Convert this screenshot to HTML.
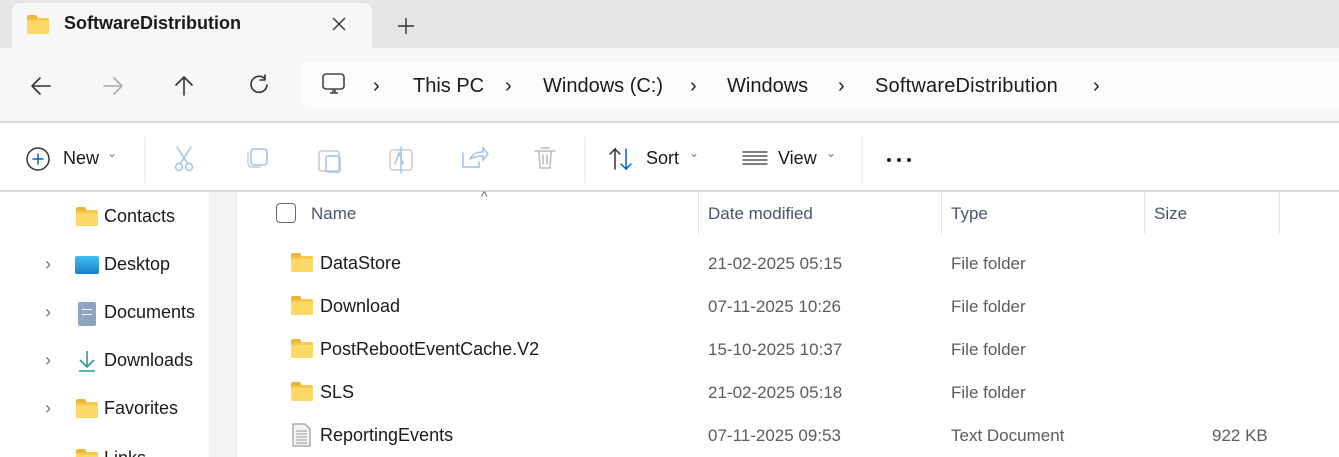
<!DOCTYPE html>
<html><head><style>
*{margin:0;padding:0;box-sizing:border-box}
html,body{width:1339px;height:457px;overflow:hidden}
body{background:#fff;font-family:"Segoe UI","Liberation Sans",sans-serif;color:#1a1a1a;position:relative}
.a{position:absolute}
.t{font-size:18px;white-space:nowrap}
.g{color:#5c5c5c;font-size:17px}
.h{color:#4a5568;font-size:17px}
.fold{position:absolute;width:22px;height:16px;background:#f8c94a;border-radius:2px}
.fold:before{content:"";position:absolute;left:0;top:-3px;width:10px;height:4px;background:#e9b83a;border-radius:2px 2px 0 0}
.fold:after{content:"";position:absolute;left:0;top:3px;width:22px;height:13px;background:#fcd869;border-radius:1px}
.chev{position:absolute;color:#777;font-size:18px}
</style></head><body>
<div class="a" style="left:0;top:0;width:1339px;height:48px;background:#e6e6e6"></div>
<div class="a" style="left:12px;top:3px;width:360px;height:46px;background:#f7f7f7;border-radius:8px 8px 0 0"></div>
<div class="fold" style="left:27px;top:18px"></div>
<div class="a t" style="left:64px;top:13px;font-size:18px;font-weight:600">SoftwareDistribution</div>
<svg class="a" style="left:330px;top:15px" width="18" height="18"><path d="M3 3l12 12M15 3L3 15" stroke="#333" stroke-width="1.4"/></svg>
<svg class="a" style="left:396px;top:16px" width="20" height="20"><path d="M10 2v16M2 10h16" stroke="#333" stroke-width="1.4"/></svg>
<div class="a" style="left:0;top:48px;width:1339px;height:73px;background:#f7f7f7"></div>
<div class="a" style="left:302px;top:62px;width:1037px;height:47px;background:#fcfcfc;border-radius:6px 0 0 6px"></div>
<svg class="a" style="left:0;top:60px" width="300" height="50"><g fill="none" stroke-width="1.6" stroke-linecap="round" stroke-linejoin="round">
<path d="M32 26H50M32 26l8-8M32 26l8 8" stroke="#333"/>
<path d="M104 26h18M122 26l-8-8M122 26l-8 8" stroke="#aaa"/>
<path d="M184 17v18M184 17l-8 8M184 17l8 8" stroke="#333"/>
<path d="M265 19a8 8 0 1 0 2 6M265 15v5h-5" stroke="#333"/>
</g></svg>
<svg class="a" style="left:320px;top:72px" width="30" height="26"><rect x="3" y="2" width="21" height="15" rx="3" fill="none" stroke="#444" stroke-width="1.6"/><path d="M10 21h8M13 17v4M15 17v4" stroke="#444" stroke-width="1.5"/></svg>
<div class="a t" style="left:373px;top:75px;font-size:20px">›</div>
<div class="a t" style="left:413px;top:75px;font-size:20px">This PC</div>
<div class="a t" style="left:505px;top:75px;font-size:20px">›</div>
<div class="a t" style="left:543px;top:75px;font-size:20px">Windows (C:)</div>
<div class="a t" style="left:690px;top:75px;font-size:20px">›</div>
<div class="a t" style="left:727px;top:75px;font-size:20px">Windows</div>
<div class="a t" style="left:838px;top:75px;font-size:20px">›</div>
<div class="a t" style="left:875px;top:75px;font-size:20px;letter-spacing:0.2px">SoftwareDistribution</div>
<div class="a t" style="left:1093px;top:75px;font-size:20px">›</div>
<div class="a" style="left:0;top:121px;width:1339px;height:2px;background:#d9d9d9"></div>
<svg class="a" style="left:0;top:123px" width="940" height="68"><g fill="none" stroke-width="1.5" stroke-linecap="round">
<circle cx="38" cy="36" r="11" stroke="#333"/><path d="M38 31v10M33 36h10" stroke="#0067c0"/>
<path d="M177 24l11 17M191 24l-11 17" stroke="#9ec3e6"/><circle cx="179" cy="44" r="3.5" stroke="#9ec3e6"/><circle cx="189" cy="44" r="3.5" stroke="#9ec3e6"/>
<rect x="251" y="26" width="16" height="16" rx="3" stroke="#9ec3e6"/><path d="M248 30v10a4 4 0 0 0 4 4h8" stroke="#ccc"/>
<rect x="319" y="28" width="20" height="20" rx="2" stroke="#ccc"/><rect x="326" y="33" width="14" height="16" rx="2" stroke="#9ec3e6"/>
<rect x="390" y="27" width="22" height="20" rx="3" stroke="#ccc"/><path d="M401 24v26M395 41l4-11 4 11" stroke="#9ec3e6"/>
<path d="M463 30v14h16v-5M470 36c3-6 8-7 13-7v-4l5 6-5 6v-4c-5 0-9 1-13 3" stroke="#9ec3e6"/>
<path d="M535 28h20M539 28l1 17h10l1-17M541 25h8M543 32v9M547 32v9" stroke="#bbb"/>
<path d="M615 46V26l-5 5M615 26l5 5" stroke="#333"/><path d="M626 26v20l-5-5M626 46l5-5" stroke="#0067c0"/>
<path d="M743 29h24M743 33h24M743 37h24M743 41h24" stroke="#333" stroke-width="1.2"/>
</g>
<circle cx="889" cy="37" r="2" fill="#222"/><circle cx="899" cy="37" r="2" fill="#222"/><circle cx="909" cy="37" r="2" fill="#222"/>
<path d="M145 14v46M585 14v46M862 14v46" stroke="#e3e3e3"/>
</svg>
<div class="a t" style="left:63px;top:148px">New</div><div class="chev" style="left:107px;top:146px;font-size:12px">⌄</div>
<div class="a t" style="left:646px;top:148px">Sort</div><div class="chev" style="left:689px;top:146px;font-size:12px">⌄</div>
<div class="a t" style="left:778px;top:148px">View</div><div class="chev" style="left:826px;top:146px;font-size:12px">⌄</div>
<div class="a" style="left:0;top:190px;width:1339px;height:2px;background:#d9d9d9"></div>
<div class="a" style="left:209px;top:192px;width:27px;height:265px;background:#f3f3f3"></div>
<div class="a" style="left:236px;top:192px;width:1px;height:265px;background:#e5e5e5"></div>
<div class="fold" style="left:76px;top:210px"></div><div class="a t" style="left:104px;top:206px">Contacts</div>
<div class="chev" style="left:45px;top:254px">›</div>
<div class="a" style="left:75px;top:256px;width:24px;height:18px;background:linear-gradient(#3fc0ee,#1a7fc9);border-radius:2px"></div><div class="a t" style="left:104px;top:254px">Desktop</div>
<div class="chev" style="left:45px;top:302px">›</div>
<div class="a" style="left:78px;top:302px;width:18px;height:24px;background:#8fa4c0;border-radius:2px"></div><div class="a" style="left:82px;top:309px;width:10px;height:6px;border-top:1.5px solid #fff;border-bottom:1.5px solid #fff"></div><div class="a t" style="left:104px;top:302px">Documents</div>
<div class="chev" style="left:45px;top:350px">›</div>
<svg class="a" style="left:76px;top:348px" width="22" height="26"><path d="M11 3v16M4 12l7 7 7-7M3 23h16" fill="none" stroke="#2a9d8f" stroke-width="1.6"/></svg><div class="a t" style="left:104px;top:350px">Downloads</div>
<div class="chev" style="left:45px;top:398px">›</div>
<div class="fold" style="left:76px;top:402px"></div><div class="a t" style="left:104px;top:398px">Favorites</div>
<div class="fold" style="left:76px;top:452px"></div><div class="a t" style="left:104px;top:448px">Links</div>
<div class="a" style="left:276px;top:203px;width:20px;height:20px;border:1.5px solid #666;border-radius:4px"></div>
<div class="a h" style="left:311px;top:204px">Name</div>
<div class="a" style="left:481px;top:188px;color:#666;font-size:14px">^</div>
<div class="a" style="left:698px;top:192px;width:1px;height:42px;background:#e5e5e5"></div>
<div class="a h" style="left:708px;top:204px">Date modified</div>
<div class="a" style="left:941px;top:192px;width:1px;height:42px;background:#e5e5e5"></div>
<div class="a h" style="left:951px;top:204px">Type</div>
<div class="a" style="left:1144px;top:192px;width:1px;height:42px;background:#e5e5e5"></div>
<div class="a h" style="left:1154px;top:204px">Size</div>
<div class="a" style="left:1279px;top:192px;width:1px;height:42px;background:#e5e5e5"></div>
<div class="fold" style="left:291px;top:256px"></div><div class="a t" style="left:320px;top:253px">DataStore</div><div class="a g" style="left:708px;top:254px">21-02-2025 05:15</div><div class="a g" style="left:951px;top:254px">File folder</div>
<div class="fold" style="left:291px;top:299px"></div><div class="a t" style="left:320px;top:296px">Download</div><div class="a g" style="left:708px;top:297px">07-11-2025 10:26</div><div class="a g" style="left:951px;top:297px">File folder</div>
<div class="fold" style="left:291px;top:342px"></div><div class="a t" style="left:320px;top:339px">PostRebootEventCache.V2</div><div class="a g" style="left:708px;top:340px">15-10-2025 10:37</div><div class="a g" style="left:951px;top:340px">File folder</div>
<div class="fold" style="left:291px;top:385px"></div><div class="a t" style="left:320px;top:382px">SLS</div><div class="a g" style="left:708px;top:383px">21-02-2025 05:18</div><div class="a g" style="left:951px;top:383px">File folder</div>
<svg class="a" style="left:292px;top:423px" width="20" height="24"><path d="M1 1h12l5 5v17H1z" fill="#f4f4f4" stroke="#888"/><path d="M4 8h11M4 11h11M4 14h11M4 17h11M4 20h11" stroke="#999"/></svg>
<div class="a t" style="left:320px;top:425px">ReportingEvents</div><div class="a g" style="left:708px;top:426px">07-11-2025 09:53</div><div class="a g" style="left:951px;top:426px">Text Document</div><div class="a g" style="left:1212px;top:426px">922 KB</div>
</body></html>
